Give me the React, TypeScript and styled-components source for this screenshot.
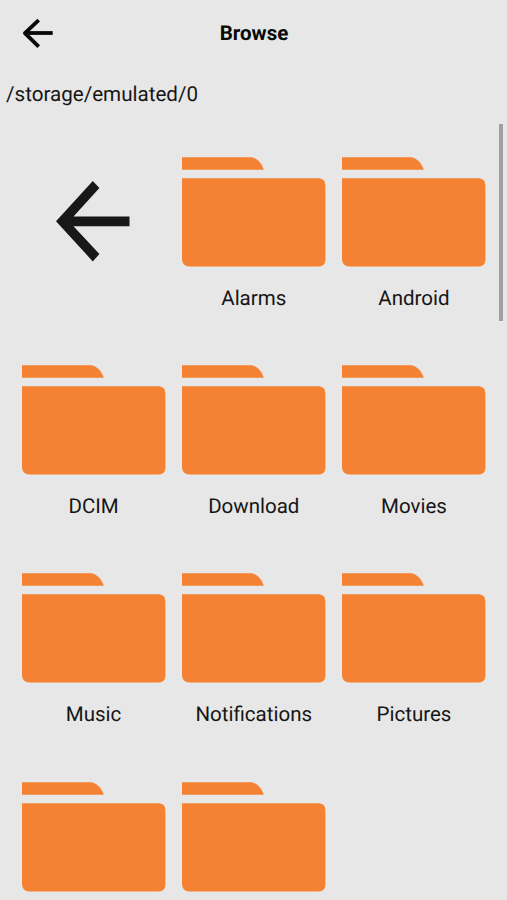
import React from "react";
import styled, { createGlobalStyle } from "styled-components";

const GlobalStyle = createGlobalStyle`
  body {
    margin: 0;
    background: #e7e7e7;
    color: #161616;
    font-family: Roboto, "Liberation Sans", sans-serif;
    text-rendering: geometricPrecision;
  }
`;

const Screen = styled.main`
  display: flex;
  flex-direction: column;
  height: 900px;
  overflow: hidden;
  background: #e7e7e7;
`;

const Header = styled.header`
  display: grid;
  grid-template-columns: 77px 1fr 76px;
  align-items: center;
  height: 66px;
  flex: none;
`;

const BackButton = styled.button`
  display: flex;
  align-items: center;
  height: 66px;
  padding: 0 0 0 22px;
  border: 0;
  background: none;
  color: #080808;
`;

const Title = styled.h1`
  margin: 0;
  padding-top: 2px;
  text-align: center;
  color: #080808;
  font-size: 20.5px;
  font-weight: 700;
  line-height: 24px;
`;

const Path = styled.div`
  flex: none;
  height: 58px;
  padding-left: 6px;
  box-sizing: border-box;
  font-size: 20.6px;
  line-height: 58px;
`;

const Listing = styled.section`
  display: flex;
  flex: 1;
  min-height: 0;
  overflow: hidden;
`;

const Grid = styled.div`
  display: grid;
  grid-template-columns: repeat(3, 160.2px);
  grid-auto-rows: 208.2px;
  flex: 1;
  padding-left: 13.5px;
`;

const Tile = styled.div`
  display: flex;
  flex-direction: column;
  align-items: center;
  padding-top: 33px;
  box-sizing: border-box;
`;

const ParentTile = styled(Tile)`
  padding-top: 56px;
`;

const Label = styled.span`
  margin-top: 20px;
  font-size: 20.5px;
  line-height: 24px;
`;

const ScrollThumb = styled.div`
  flex: none;
  width: 3.5px;
  height: 197px;
  margin-right: 4.5px;
  background: #a0a0a0;
`;

const FolderIcon = () => (
  <svg width="144" height="110" viewBox="0 0 144 110" fill="#f58232" aria-hidden="true">
    <path d="M0 .3H68C74.5 .3 79.5 6 81.8 12.7H0Z" />
    <path d="M0 21.3H137Q143.4 22 143.4 28V103Q143 109 137 109.5H7Q1 109 0 103Z" />
  </svg>
);

const folders = [
  { id: 1, name: "Alarms" },
  { id: 2, name: "Android" },
  { id: 3, name: "DCIM" },
  { id: 4, name: "Download" },
  { id: 5, name: "Movies" },
  { id: 6, name: "Music" },
  { id: 7, name: "Notifications" },
  { id: 8, name: "Pictures" },
  { id: 9 },
  { id: 10 },
];

export default function App() {
  return (
    <Screen>
      <GlobalStyle />
      <Header>
        <BackButton aria-label="Back">
          <svg width="32" height="32" viewBox="0 0 32 32" fill="none" stroke="currentColor" strokeWidth="3.8">
            <path d="M30.7 16H3" />
            <path d="M16.7 3.2 2.9 16.1 16.7 29.6" strokeLinejoin="round" />
          </svg>
        </BackButton>
        <Title>Browse</Title>
      </Header>
      <Path>/storage/emulated/0</Path>
      <Listing>
        <Grid>
          <ParentTile>
            <svg width="76" height="82" viewBox="0 0 76 82" fill="#181818" aria-hidden="true">
              <path d="M36.8 1 43.4 8 17.5 36.4H73.5V46.2H17.5L43.4 74 36.8 81.4 0 41.2Z" />
            </svg>
          </ParentTile>
          {folders.map(({ id, name }) => (
            <Tile key={id}>
              <FolderIcon />
              {name && <Label>{name}</Label>}
            </Tile>
          ))}
        </Grid>
        <ScrollThumb />
      </Listing>
    </Screen>
  );
}
